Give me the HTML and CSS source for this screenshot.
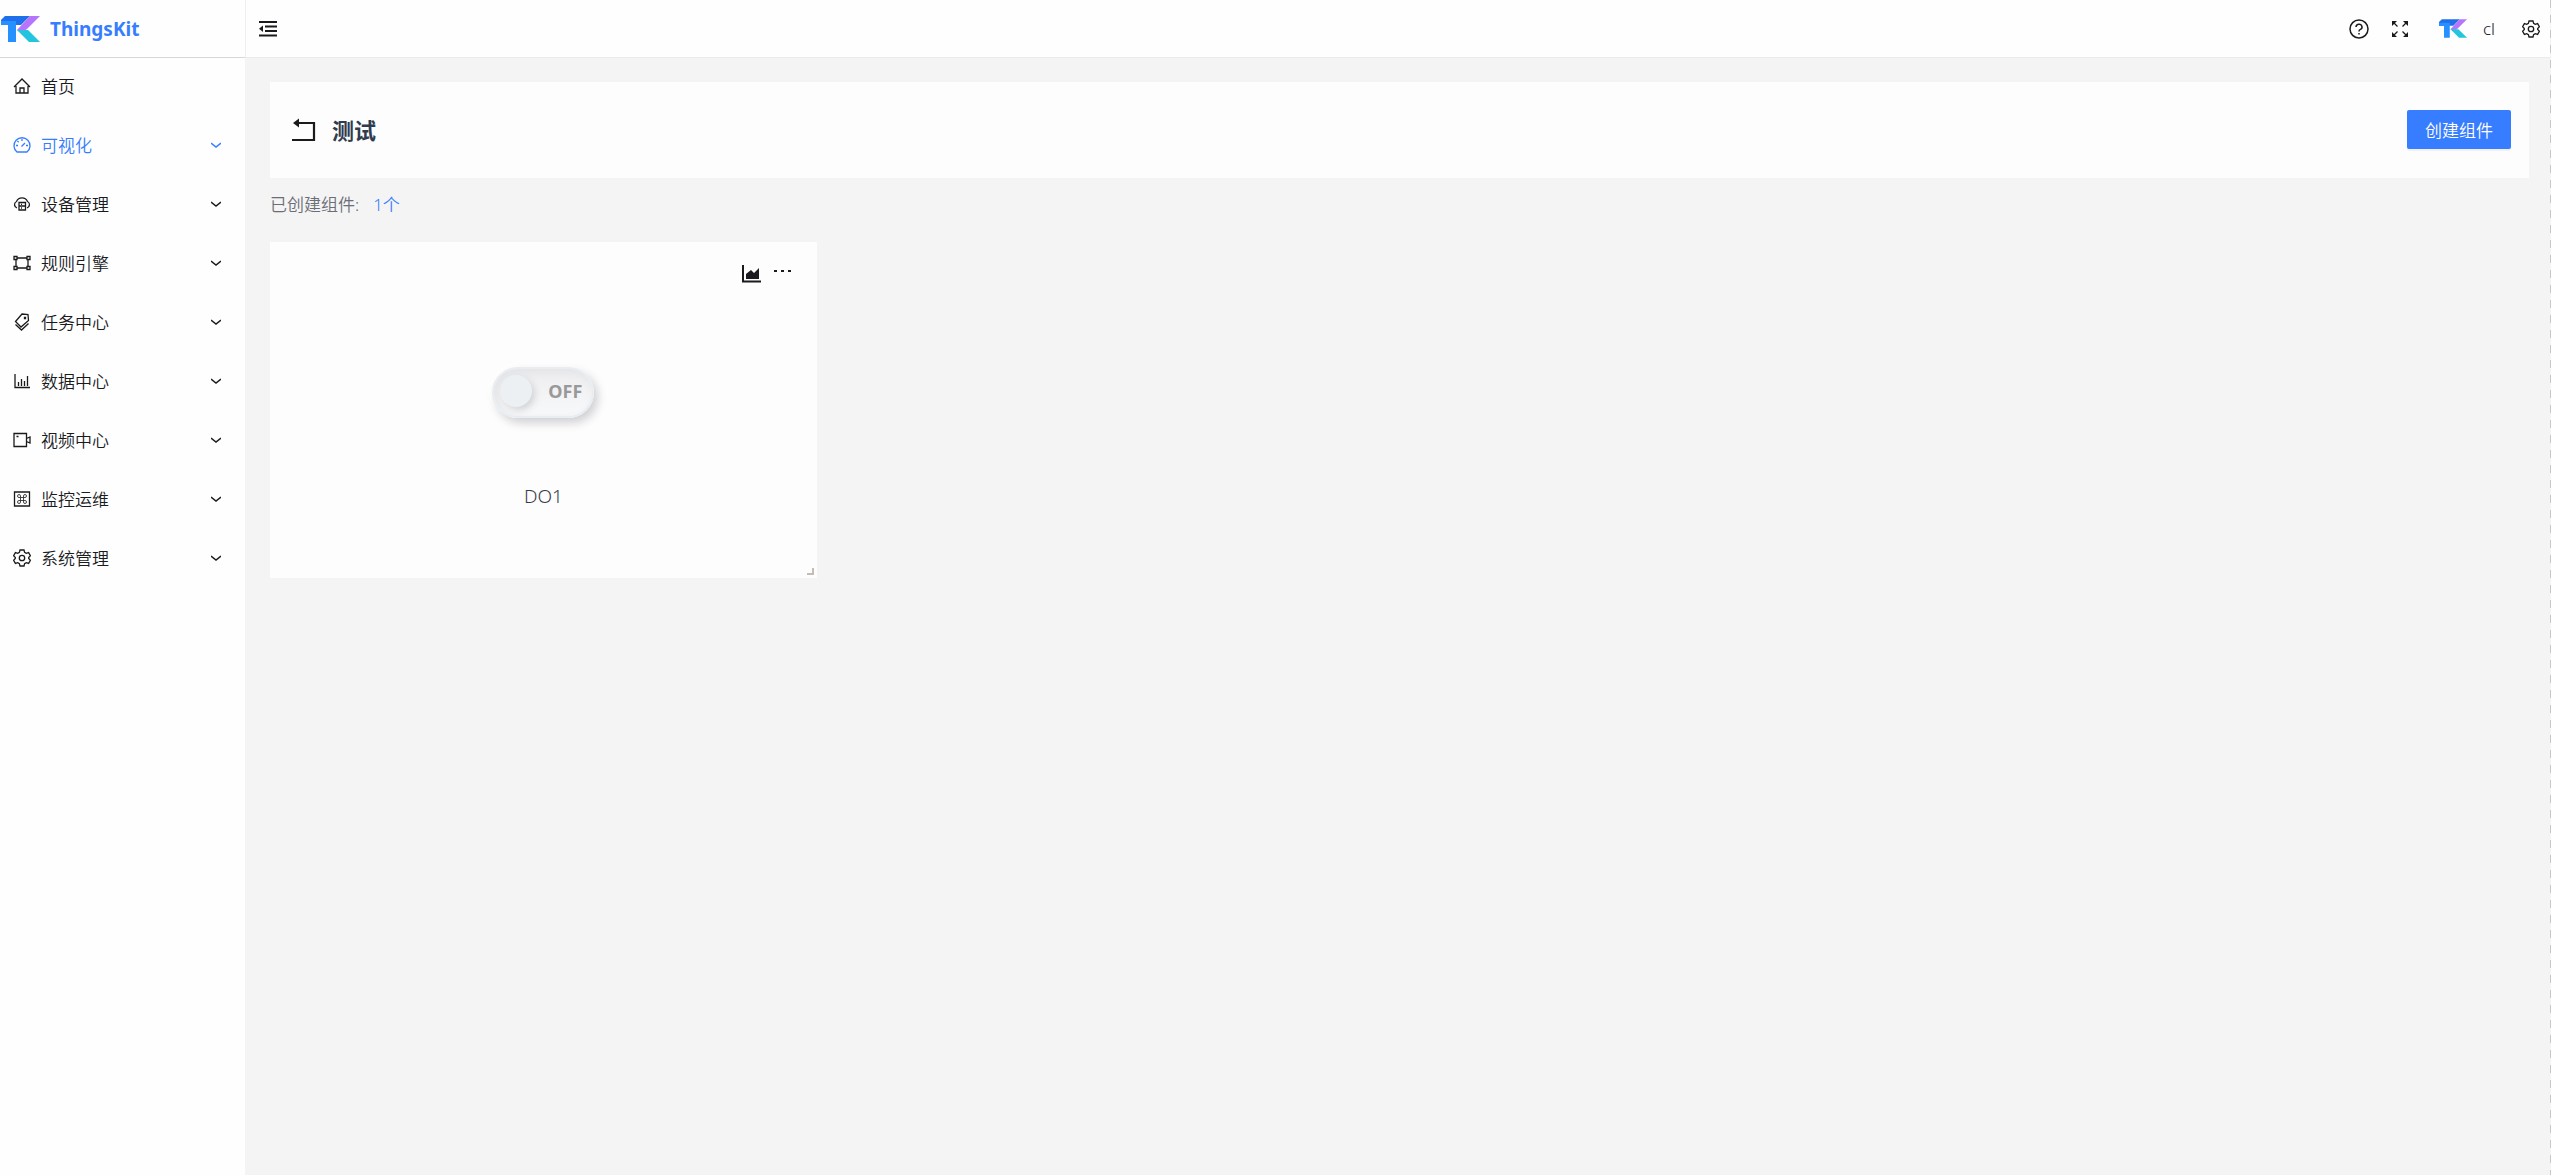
FILE: index.html
```
<!DOCTYPE html>
<html lang="zh-CN">
<head>
    <meta charset="UTF-8">
    <meta name="viewport" content="width=device-width, initial-scale=1.0">
    <title>ThingsKit</title>
    <link rel="stylesheet" href="styles.css">
</head>
<body>
    <!-- 公用图标 -->
    <svg class="sprite" aria-hidden="true">
        <symbol id="logo" viewBox="0 0 39 26">
            <path fill="#1f6fea" d="M4 0h25l-9 9H0V4z"/>
            <path fill="#2590ff" d="M0 5h15v21H7V9H0z"/>
            <path fill="#b673fb" d="M29 0h10L26 13 20 17l-4-3z"/>
            <path fill="#22c4de" d="M16 14h11l12 12H28z"/>
        </symbol>
        <symbol id="down" viewBox="0 0 10 6">
            <path d="M0 1l5 4 5-4"/>
        </symbol>
        <symbol id="gear" viewBox="0 0 18 18">
            <path d="M7 1h4l.6 2.4 1.6 1 2.4-.8 1.8 3.2L15.700 8.500v1l1.700 1.700-1.800 3.200-2.400-.8-1.600 1L11 17H7l-.6-2.400-1.600-1-2.400.8-1.800-3.200L2.300 9.500v-1L.6 6.800l1.800-3.200 2.400.8 1.600-1z"/>
            <circle cx="9" cy="9" r="2.700"/>
        </symbol>
    </svg>

    <div class="layout">
        <aside class="sider">
            <a class="brand" href="#">
                <svg class="brand-logo"><use href="#logo"/></svg>
                <span>ThingsKit</span>
            </a>
            <nav class="menu">
                <a class="menu-item" href="#">
                    <svg class="icon" viewBox="0 0 18 18"><path d="M1 10l8-8 8 8M3 9v7h12V9M7 16v-5h4v5"/></svg>
                    <span>首页</span>
                </a>
                <a class="menu-item active" href="#">
                    <svg class="icon" viewBox="0 0 18 18"><path d="M4 16a8 8 0 1 1 10 0zM8.500 10.500L12 7M9 3v2M3 9.500h2M13 9.500h2M4.500 5l1.200 1.200"/></svg>
                    <span>可视化</span>
                    <svg class="arrow"><use href="#down"/></svg>
                </a>
                <a class="menu-item" href="#">
                    <svg class="icon" viewBox="0 0 18 18"><path d="M4 13a3.500 3.500 0 0 1-.5-6.500 6 6 0 0 1 11 0A3.500 3.500 0 0 1 14 13M6 7.500h6.500V15H6zM6 11h6.500M8 9.300h1M8 13h1"/></svg>
                    <span>设备管理</span>
                    <svg class="arrow"><use href="#down"/></svg>
                </a>
                <a class="menu-item" href="#">
                    <svg class="icon" viewBox="0 0 18 18"><path d="M1 2.500h3v3H1zM14 2.500h3v3h-3zM1 12.500h3v3H1zM14 12.500h3v3h-3zM4 4h10M4 14h10M3 5.500v7M15 5.500v7"/></svg>
                    <span>规则引擎</span>
                    <svg class="arrow"><use href="#down"/></svg>
                </a>
                <a class="menu-item" href="#">
                    <svg class="icon" viewBox="0 0 18 18"><path d="M9 1l6 .5.5 6L8 14 2.500 8.500zM2.500 11.500L8.500 17l7-6.500M11.500 4.500h1v1h-1z"/></svg>
                    <span>任务中心</span>
                    <svg class="arrow"><use href="#down"/></svg>
                </a>
                <a class="menu-item" href="#">
                    <svg class="icon" viewBox="0 0 18 18"><path d="M2 2v13.500h15M5.500 14v-4M8.500 14V7M11.500 14V9M14.500 14V4"/></svg>
                    <span>数据中心</span>
                    <svg class="arrow"><use href="#down"/></svg>
                </a>
                <a class="menu-item" href="#">
                    <svg class="icon" viewBox="0 0 18 18"><path d="M1 2.500h12.500v13H1zM13.500 7.500L17 6v6l-3.500-1.500M3.500 5.500h2"/></svg>
                    <span>视频中心</span>
                    <svg class="arrow"><use href="#down"/></svg>
                </a>
                <a class="menu-item" href="#">
                    <svg class="icon" viewBox="0 0 18 18"><path d="M1.500 2h15v14h-15z"/><path class="thin" d="M7.500 7.500h3v3h-3zM7.500 7.500H6A1.500 1.500 0 1 1 7.500 6zM10.500 7.500V6A1.500 1.500 0 1 1 12 7.500zM10.500 10.500H12a1.500 1.500 0 1 1-1.500 1.500zM7.500 10.500V12A1.500 1.500 0 1 1 6 10.500z"/></svg>
                    <span>监控运维</span>
                    <svg class="arrow"><use href="#down"/></svg>
                </a>
                <a class="menu-item" href="#">
                    <svg class="icon"><use href="#gear"/></svg>
                    <span>系统管理</span>
                    <svg class="arrow"><use href="#down"/></svg>
                </a>
            </nav>
        </aside>

        <div class="main">
            <header class="header">
                <button class="icon-btn" type="button" aria-label="折叠菜单">
                    <svg class="icon" viewBox="0 0 18 18"><path d="M0 2h18M6 6.500h12M6 11h12M0 15.500h18"/><path class="fill" d="M0 8.800L4 5.500v6.500z"/></svg>
                </button>
                <div class="header-right">
                    <button class="icon-btn help" type="button" aria-label="帮助">
                        <svg viewBox="0 0 20 20"><circle cx="10" cy="10" r="9"/><path d="M7 8a3 2.800 0 1 1 4.500 2.400Q10 11 10 12.500M10 14v1.500"/></svg>
                    </button>
                    <button class="icon-btn full" type="button" aria-label="全屏">
                        <svg class="icon" viewBox="0 0 18 18"><path d="M2 2l4.500 4.500M16 2l-4.500 4.500M2 16l4.500-4.500M16 16l-4.500-4.500"/><path class="fill" d="M1 1h5L1 6zM17 1v5l-5-5zM1 17v-5l5 5zM17 17h-5l5-5z"/></svg>
                    </button>
                    <button class="user" type="button">
                        <svg class="avatar"><use href="#logo"/></svg>
                        <span>cl</span>
                    </button>
                    <button class="icon-btn" type="button" aria-label="设置">
                        <svg class="icon"><use href="#gear"/></svg>
                    </button>
                </div>
            </header>

            <main class="content">
                <section class="page-head">
                    <button class="icon-btn back" type="button" aria-label="返回">
                        <svg viewBox="0 0 24 24"><path d="M4 6h18v17H0"/><path class="fill" d="M1 6l6-4.500v9z"/></svg>
                    </button>
                    <h1>测试</h1>
                    <button class="create" type="button">创建组件</button>
                </section>

                <p class="count">已创建组件:<a href="#">1个</a></p>

                <div class="widgets">
                    <section class="widget">
                        <div class="widget-tools">
                            <button class="icon-btn" type="button" aria-label="历史趋势">
                                <svg class="chart" viewBox="0 0 19 18"><path d="M1 0v16.500h18"/><path class="fill" d="M4 14V9l5-4 3 3 5-5v11z"/></svg>
                            </button>
                            <button class="icon-btn" type="button" aria-label="更多">
                                <svg class="more" viewBox="0 0 18 4"><path class="fill" d="M0 1h3v2H0zM7 1h3v2H7zM14 1h3v2h-3z"/></svg>
                            </button>
                        </div>
                        <label class="switch">
                            <input type="checkbox" aria-label="DO1">
                            <span class="knob"></span>
                            <span class="state">OFF</span>
                        </label>
                        <div class="widget-name">DO1</div>
                        <span class="resize"></span>
                    </section>
                </div>
            </main>
        </div>
    </div>
</body>
</html>
```
FILE: styles.css
```
* {
    box-sizing: border-box;
}
body {
    margin: 0;
    font-family: "Noto Sans", "Noto Sans CJK SC", sans-serif;
    font-size: 17px;
    font-weight: 350;
    color: #1a1b1e;
    background-color: #f4f4f4;
}
a {
    color: inherit;
    text-decoration: none;
}
button {
    font: inherit;
    color: inherit;
    border: none;
    background: none;
    padding: 0;
    cursor: pointer;
}
svg {
    display: block;
    fill: none;
    stroke: currentColor;
    stroke-width: 1.3;
}
.fill {
    fill: currentColor;
    stroke: none;
}
.thin {
    stroke-width: 0.8;
}
.sprite {
    display: none;
}
.icon {
    width: 18px;
    height: 18px;
}
.layout {
    display: flex;
    min-height: 100vh;
}

/* 侧边栏 */
.sider {
    width: 245px;
    flex-shrink: 0;
    background-color: #fefefe;
}
.brand {
    display: flex;
    align-items: center;
    gap: 10px;
    height: 58px;
    padding-left: 1px;
    border-bottom: 1px solid #d8d8d8;
    color: #377dff;
    font-size: 19px;
    font-weight: 700;
}
.brand-logo {
    width: 39px;
    height: 26px;
    stroke: none;
}
.menu-item {
    display: flex;
    align-items: center;
    height: 59px;
    padding: 0 24px 4px 13px;
}
.menu-item .icon {
    margin-right: 10px;
}
.menu-item .arrow {
    width: 10px;
    height: 6px;
    margin-left: auto;
    stroke-width: 1.5;
}
.menu-item.active {
    color: #377dff;
}

/* 顶栏 */
.main {
    flex: 1;
    min-width: 0;
    background: repeating-linear-gradient(#c8c8c8 0 8px, transparent 8px 15px) right top / 1px 100% no-repeat;
}
.header {
    display: flex;
    align-items: center;
    justify-content: space-between;
    height: 58px;
    margin-right: 1px;
    padding: 0 10px 0 13px;
    border-left: 1px solid #eee;
    border-bottom: 1px solid #ebebeb;
    background-color: #fefefe;
}
.header > .icon-btn .icon {
    stroke-width: 2;
}
.header-right {
    display: flex;
    align-items: center;
}
.help {
    margin-right: 22px;
}
.help svg {
    width: 20px;
    height: 20px;
    stroke-width: 1.5;
}
.full {
    margin-right: 30px;
}
.user {
    display: flex;
    align-items: center;
    gap: 16px;
    margin-right: 27px;
}
.avatar {
    width: 28px;
    height: 19px;
    stroke: none;
}

/* 内容区 */
.content {
    padding: 24px 22px 24px 25px;
}
.page-head {
    display: flex;
    align-items: center;
    height: 96px;
    padding: 0 18px 2px 22px;
    background-color: #fdfdfd;
}
.back svg {
    width: 24px;
    height: 24px;
    stroke-width: 2.2;
}
h1 {
    margin: 0 auto 0 16px;
    font-size: 22px;
    font-weight: 700;
    color: #303b50;
}
.create {
    height: 39px;
    padding: 0 18px;
    border-radius: 2px;
    color: #fff;
    background-color: #377dff;
    box-shadow: 0 2px 1px rgba(0, 0, 0, 0.05);
}
.count {
    margin: 14px 0 24px;
    line-height: 26px;
    color: #6b6e77;
}
.count a {
    margin-left: 14px;
    color: #377dff;
}
.widgets {
    display: grid;
    grid-template-columns: repeat(4, 1fr);
    gap: 24px;
}
.widget {
    position: relative;
    display: flex;
    flex-direction: column;
    align-items: center;
    height: 336px;
    padding: 23px 25px;
    background-color: #fdfdfd;
}
.widget-tools {
    display: flex;
    align-items: flex-start;
    gap: 13px;
    align-self: flex-end;
}
.chart {
    width: 19px;
    height: 18px;
    stroke-width: 2;
}
.more {
    width: 18px;
    height: 12px;
}
.switch {
    display: flex;
    align-items: center;
    justify-content: space-between;
    width: 102px;
    height: 51px;
    margin-top: 84px;
    padding: 0 10px 4px 6px;
    border: 2px solid #e9edf1;
    border-radius: 26px;
    background: linear-gradient(#ededef, #f8f9fa);
    box-shadow: 4px 5px 10px #d0d0d4, -2px -2px 8px #fff, inset 3px 3px 8px #e2e3e6;
    cursor: pointer;
}
.switch input {
    position: absolute;
    opacity: 0;
}
.knob {
    width: 32px;
    height: 32px;
    border-radius: 50%;
    background-color: #ecf0f3;
    box-shadow: 3px 3px 7px #d2d3d6;
}
.state {
    font-size: 18px;
    font-weight: 700;
    color: #999;
}
.widget-name {
    margin-top: 64px;
    font-size: 19px;
    line-height: 28px;
    color: #373b48;
}
.resize {
    position: absolute;
    right: 3px;
    bottom: 3px;
    width: 7px;
    height: 7px;
    border-right: 2px solid #c4bcb6;
    border-bottom: 2px solid #c4bcb6;
}
```
